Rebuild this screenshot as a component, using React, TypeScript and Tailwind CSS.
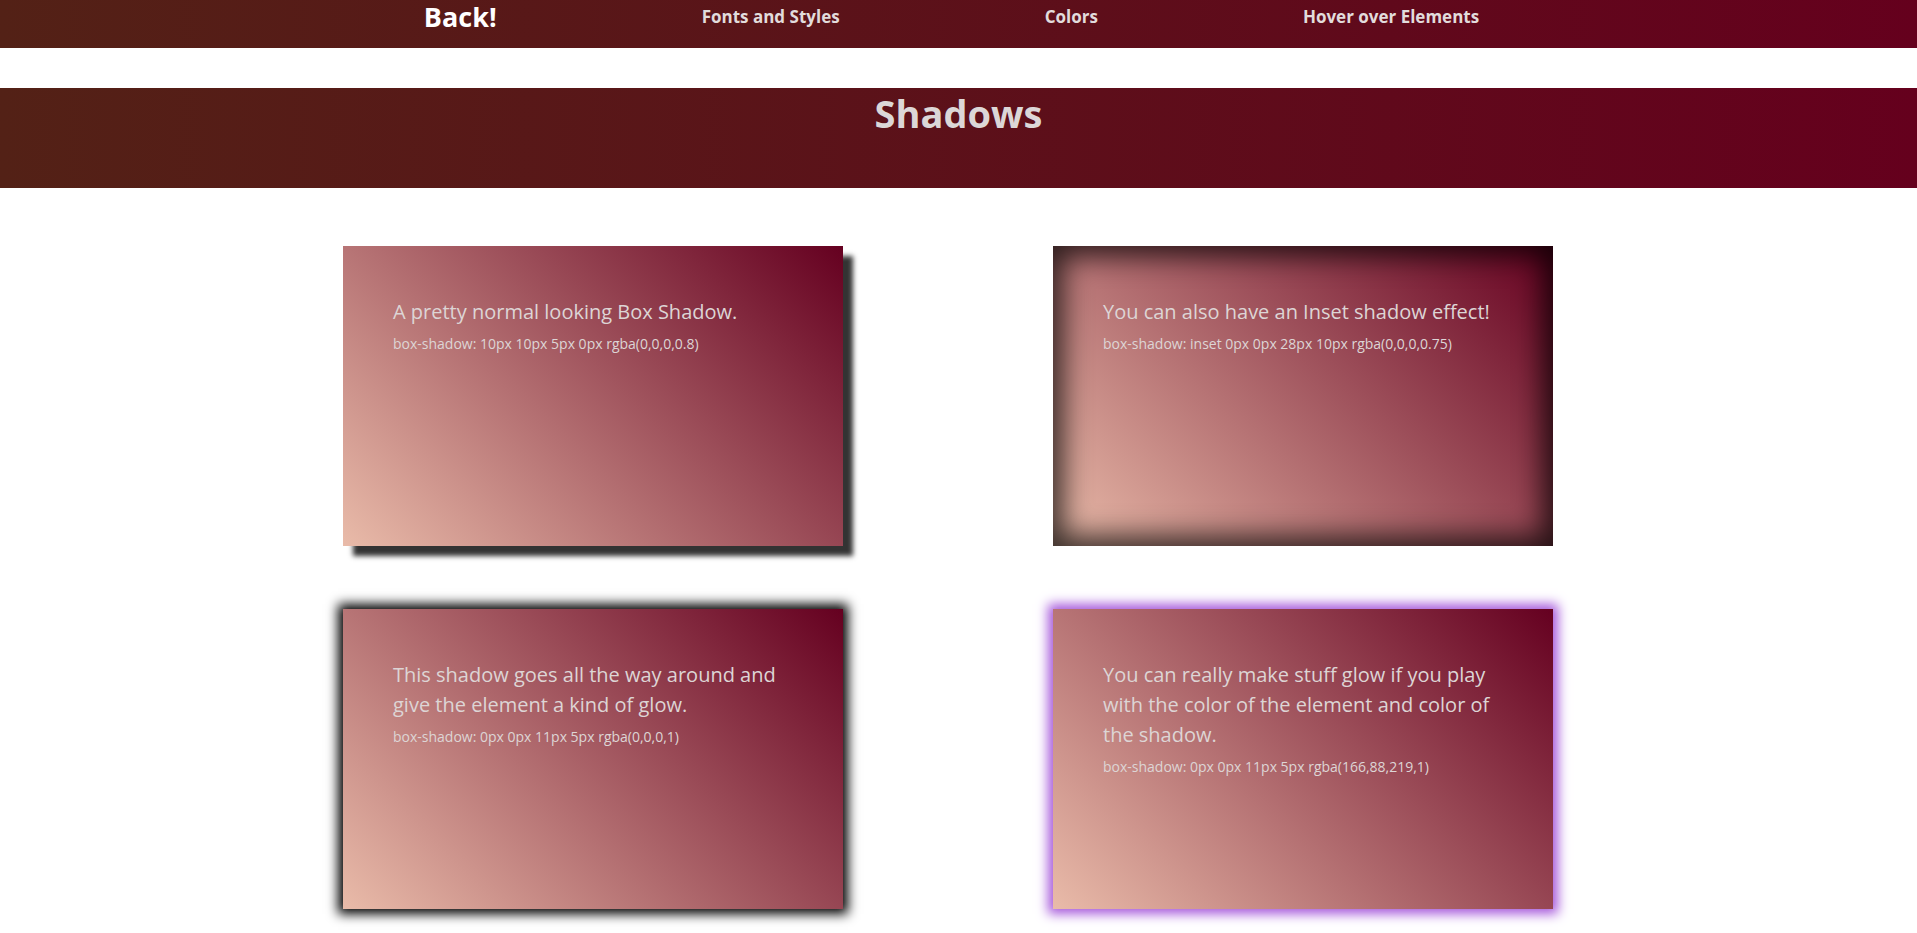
import React from 'react';

const cards = [
  {
    title: ['A pretty normal looking Box Shadow.'],
    code: 'box-shadow: 10px 10px 5px 0px rgba(0,0,0,0.8)',
    shadow: 'shadow-[10px_10px_5px_0px_rgba(0,0,0,0.8)]',
  },
  {
    title: ['You can also have an Inset shadow effect!'],
    code: 'box-shadow: inset 0px 0px 28px 10px rgba(0,0,0,0.75)',
    shadow: 'shadow-[inset_0px_0px_28px_10px_rgba(0,0,0,0.75)]',
  },
  {
    title: ['This shadow goes all the way around and', 'give the element a kind of glow.'],
    code: 'box-shadow: 0px 0px 11px 5px rgba(0,0,0,1)',
    shadow: 'shadow-[0px_0px_11px_5px_rgba(0,0,0,1)]',
  },
  {
    title: ['You can really make stuff glow if you play', 'with the color of the element and color of', 'the shadow.'],
    code: 'box-shadow: 0px 0px 11px 5px rgba(166,88,219,1)',
    shadow: 'shadow-[0px_0px_11px_5px_rgba(166,88,219,1)]',
  },
];

const ShadowCard = ({ title, code, shadow }: { title: string[]; code: string; shadow: string }) => (
  <div
    className={`h-[300px] w-[500px] bg-[linear-gradient(45deg,#e9bba9,#650020)] px-[50px] pt-[51px] text-[#ddd5d5] ${shadow}`}
  >
    <p className="text-[20px] leading-[30px] whitespace-nowrap">
      {title.map((line, i) => (
        <React.Fragment key={i}>
          {line}
          {i < title.length - 1 && <br />}
        </React.Fragment>
      ))}
    </p>
    <p className="mt-[7px] text-[14px] leading-[20px]">{code}</p>
  </div>
);

const App = () => {
  return (
    <div className="min-h-screen bg-white font-['Open_Sans',sans-serif]">
      <nav className="flex h-[48px] justify-center gap-[205px] bg-[linear-gradient(to_right,#532116,#65001d)] pr-[14px]">
        <a className="pt-[3px] text-[27px] font-bold leading-none text-white">Back!</a>
        <a className="pt-[8px] text-[17px] font-bold leading-none text-[#e2dcdc]">Fonts and Styles</a>
        <a className="pt-[8px] text-[17px] font-bold leading-none text-[#e2dcdc]">Colors</a>
        <a className="pt-[8px] text-[17px] font-bold leading-none text-[#e2dcdc]">Hover over Elements</a>
      </nav>

      <header className="mt-[40px] h-[100px] bg-[linear-gradient(to_right,#532116,#65001d)]">
        <h1 className="text-center text-[38px] font-bold leading-[50px] text-[#dcd7d7]">Shadows</h1>
      </header>

      <main className="flex justify-center pr-[21px] pt-[58px] pb-[60px]">
        <div className="grid grid-cols-[500px_500px] gap-x-[210px] gap-y-[63px]">
          {cards.map((c, i) => (
            <ShadowCard key={i} {...c} />
          ))}
        </div>
      </main>
    </div>
  );
};

export default App;
